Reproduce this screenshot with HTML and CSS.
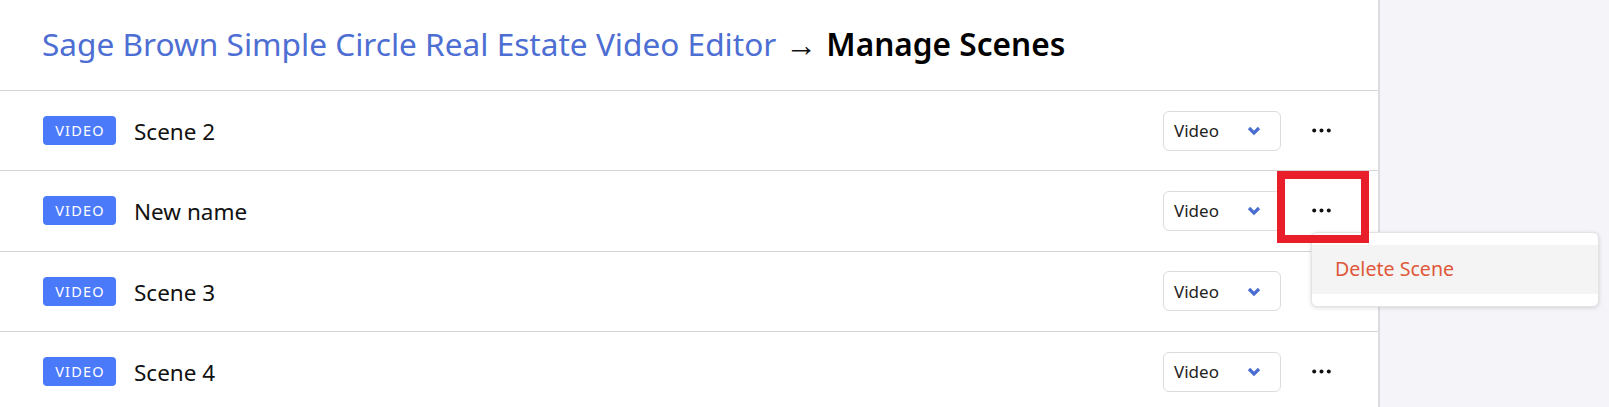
FILE: index.html
```html
<!DOCTYPE html>
<html lang="en">
<head>
    <meta charset="UTF-8">
    <meta name="viewport" content="width=device-width, initial-scale=1.0">
    <title>Manage Scenes</title>
    <link rel="stylesheet" href="styles.css">
</head>
<body>

    <div class="layout">
        <main class="panel">

            <header class="page-head">
                <h1 class="crumbs">
                    <a class="crumb-link" href="#">Sage Brown Simple Circle Real Estate Video Editor</a>
                    <span class="crumb-arrow">&rarr;</span>
                    <span class="crumb-current">Manage Scenes</span>
                </h1>
            </header>

            <ul class="scene-list">
                <li class="scene">
                    <span class="badge">Video</span>
                    <span class="scene-name">Scene 2</span>
                    <div class="scene-actions">
                        <div class="type-select">
                            <span>Video</span>
                            <svg class="chevron" width="14" height="10" viewBox="0 0 14 10"><path d="M2 2 L7 7 L12 2" fill="none" stroke="#4a6dd2" stroke-width="3.2"/></svg>
                        </div>
                        <button class="more-btn" type="button">
                            <svg width="19" height="5" viewBox="0 0 19 5"><circle cx="2.2" cy="2.5" r="2"/><circle cx="9.5" cy="2.5" r="2"/><circle cx="16.8" cy="2.5" r="2"/></svg>
                        </button>
                    </div>
                </li>

                <li class="scene">
                    <span class="badge">Video</span>
                    <span class="scene-name">New name</span>
                    <div class="scene-actions">
                        <div class="type-select">
                            <span>Video</span>
                            <svg class="chevron" width="14" height="10" viewBox="0 0 14 10"><path d="M2 2 L7 7 L12 2" fill="none" stroke="#4a6dd2" stroke-width="3.2"/></svg>
                        </div>
                        <div class="more-wrap">
                            <button class="more-btn marked" type="button">
                                <svg width="19" height="5" viewBox="0 0 19 5"><circle cx="2.2" cy="2.5" r="2"/><circle cx="9.5" cy="2.5" r="2"/><circle cx="16.8" cy="2.5" r="2"/></svg>
                            </button>
                            <div class="menu">
                                <a class="menu-item danger" href="#">Delete Scene</a>
                            </div>
                        </div>
                    </div>
                </li>

                <li class="scene">
                    <span class="badge">Video</span>
                    <span class="scene-name">Scene 3</span>
                    <div class="scene-actions">
                        <div class="type-select">
                            <span>Video</span>
                            <svg class="chevron" width="14" height="10" viewBox="0 0 14 10"><path d="M2 2 L7 7 L12 2" fill="none" stroke="#4a6dd2" stroke-width="3.2"/></svg>
                        </div>
                        <button class="more-btn" type="button">
                            <svg width="19" height="5" viewBox="0 0 19 5"><circle cx="2.2" cy="2.5" r="2"/><circle cx="9.5" cy="2.5" r="2"/><circle cx="16.8" cy="2.5" r="2"/></svg>
                        </button>
                    </div>
                </li>

                <li class="scene">
                    <span class="badge">Video</span>
                    <span class="scene-name">Scene 4</span>
                    <div class="scene-actions">
                        <div class="type-select">
                            <span>Video</span>
                            <svg class="chevron" width="14" height="10" viewBox="0 0 14 10"><path d="M2 2 L7 7 L12 2" fill="none" stroke="#4a6dd2" stroke-width="3.2"/></svg>
                        </div>
                        <button class="more-btn" type="button">
                            <svg width="19" height="5" viewBox="0 0 19 5"><circle cx="2.2" cy="2.5" r="2"/><circle cx="9.5" cy="2.5" r="2"/><circle cx="16.8" cy="2.5" r="2"/></svg>
                        </button>
                    </div>
                </li>
            </ul>

        </main>

        <aside class="side"></aside>
    </div>

</body>
</html>
```

FILE: styles.css
```css
* {
    box-sizing: border-box;
}

body {
    margin: 0;
    height: 100vh;
    overflow: hidden;
    font-family: "Noto Sans", "Open Sans", sans-serif;
    color: #111;
    background: #f4f4f9;
}

.layout {
    display: flex;
    height: 100%;
}

.panel {
    width: 1380px;
    flex-shrink: 0;
    background: #fff;
    border-right: 2px solid #dcdce1;
}

.side {
    flex: 1;
}

/* nadpis */
.page-head {
    height: 91px;
    display: flex;
    align-items: center;
    padding: 0 0 4px 42px;
    border-bottom: 1px solid #d4d4d4;
}

.crumbs {
    margin: 0;
    font-size: 31.6px;
    font-weight: 400;
    white-space: nowrap;
}

.crumb-link {
    color: #4d6ed2;
    text-decoration: none;
}

.crumb-arrow {
    color: #111;
    margin: 0 1px;
}

.crumb-current {
    font-weight: 600;
    color: #000;
}

/* zoznam scen */
.scene-list {
    list-style: none;
    margin: 0;
    padding: 0;
}

.scene {
    height: 80.33px;
    display: flex;
    align-items: center;
    padding: 0 28px 0 43px;
    border-bottom: 1px solid #d4d4d4;
}

.badge {
    display: inline-block;
    width: 73px;
    height: 29px;
    line-height: 29px;
    padding-left: 1px;
    text-align: center;
    background: #4a7afa;
    color: #fff;
    border-radius: 4px;
    font-size: 14.5px;
    letter-spacing: 1.2px;
    text-transform: uppercase;
}

.scene-name {
    margin-left: 18px;
    font-size: 22.5px;
    padding-top: 2px;
}

.scene-actions {
    margin-left: auto;
    display: flex;
    align-items: center;
    gap: 12px;
}

.type-select {
    width: 118px;
    height: 40px;
    display: flex;
    align-items: center;
    justify-content: space-between;
    padding: 0 19px 0 10px;
    border: 1px solid #dcdcdc;
    border-radius: 6px;
    font-size: 17px;
    color: #222;
}

.chevron {
    display: block;
    margin-top: 1px;
}

.more-btn {
    width: 57px;
    height: 40px;
    display: flex;
    align-items: center;
    justify-content: center;
    border: 0;
    padding: 0;
    background: none;
    fill: #111;
}

/* rozbalene menu */
.more-wrap {
    position: relative;
}

.marked {
    position: relative;
}

.marked::after {
    content: "";
    position: absolute;
    left: -16px;
    right: -19px;
    top: -19.5px;
    bottom: -12.5px;
    border: 8.5px solid #e81e2a;
    z-index: 10;
}

.menu {
    position: absolute;
    left: 18px;
    top: 41px;
    width: 288px;
    padding: 12px 0 12.5px;
    background: #fff;
    border: 1px solid #e3e3e3;
    border-radius: 6px;
    box-shadow: 0 1px 4px rgba(0, 0, 0, 0.14);
    z-index: 5;
}

.menu-item {
    display: block;
    height: 49px;
    line-height: 47px;
    padding-left: 23px;
    background: #f4f4f4;
    font-size: 19.6px;
    text-decoration: none;
}

.danger {
    color: #e0583a;
}
```
